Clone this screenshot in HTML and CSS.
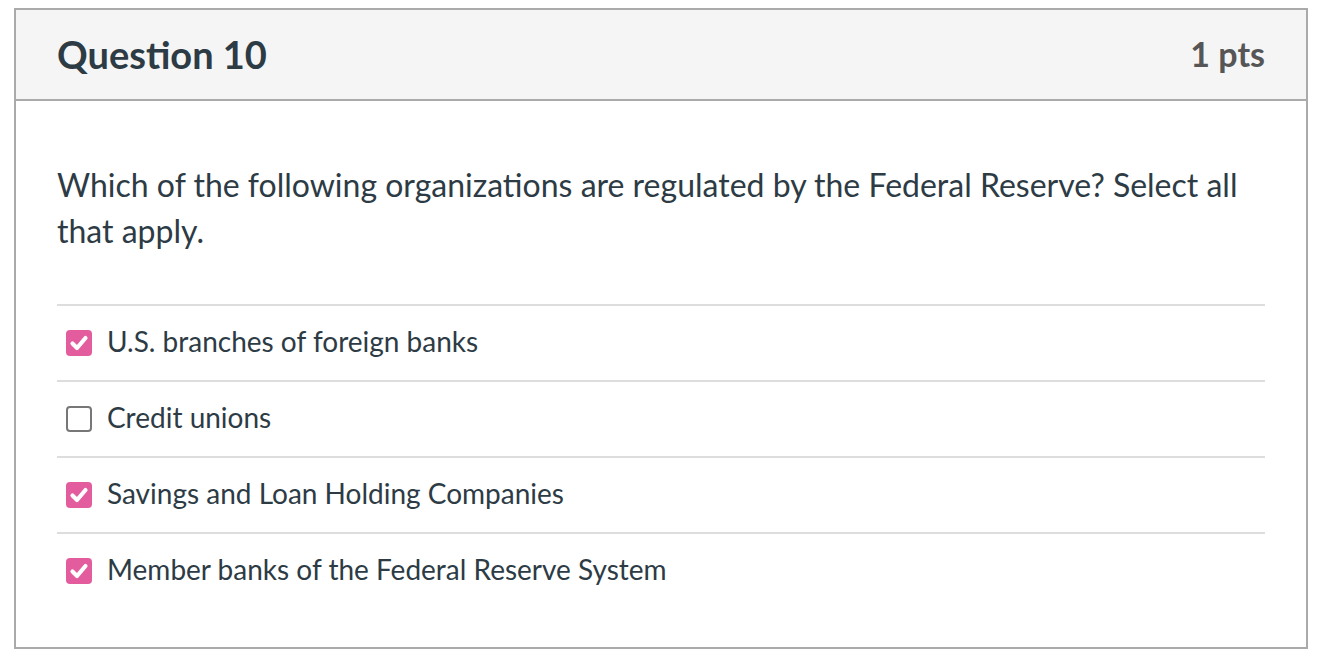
FILE: index.html
```html
<!DOCTYPE html>
<html>
<head>
<meta charset="utf-8">
<link rel="stylesheet" href="styles.css">
</head>
<body>
<div class="question">
  <div class="header">
    <h2 class="title">Question 10</h2>
    <div class="pts">1 pts</div>
  </div>
  <div class="content">
    <p class="text">Which of the following organizations are regulated by the Federal Reserve? Select all that apply.</p>
    <div class="answers">
      <div class="answer">
        <span class="box checked"><svg viewBox="0 0 26 26" width="26" height="26"><path d="M6.5 13.5 L11 18 L19.5 8" fill="none" stroke="#fff" stroke-width="4.2" stroke-linecap="round" stroke-linejoin="round"/></svg></span>
        <span class="label">U.S. branches of foreign banks</span>
      </div>
      <div class="answer">
        <span class="box"></span>
        <span class="label">Credit unions</span>
      </div>
      <div class="answer">
        <span class="box checked"><svg viewBox="0 0 26 26" width="26" height="26"><path d="M6.5 13.5 L11 18 L19.5 8" fill="none" stroke="#fff" stroke-width="4.2" stroke-linecap="round" stroke-linejoin="round"/></svg></span>
        <span class="label">Savings and Loan Holding Companies</span>
      </div>
      <div class="answer">
        <span class="box checked"><svg viewBox="0 0 26 26" width="26" height="26"><path d="M6.5 13.5 L11 18 L19.5 8" fill="none" stroke="#fff" stroke-width="4.2" stroke-linecap="round" stroke-linejoin="round"/></svg></span>
        <span class="label">Member banks of the Federal Reserve System</span>
      </div>
    </div>
  </div>
</div>
</body>
</html>
```

FILE: styles.css
```css
html, body {
  background: #fff;
}
body {
  margin: 8px 0 0 14px;
  font-family: Lato, "Open Sans", sans-serif;
  color: #2d3b45;
}
.question {
  width: 1290px;
  border: 2px solid #aaaaaa;
}
.header {
  height: 89px;
  background: #f5f5f5;
  border-bottom: 2px solid #aaaaaa;
  display: flex;
  align-items: center;
  justify-content: space-between;
  padding: 0 41px 2px;
  box-sizing: border-box;
  height: 91px;
}
.title {
  margin: 0;
  font-size: 38px;
  font-weight: 700;
  color: #2d3b45;
}
.pts {
  font-size: 34px;
  font-weight: 700;
  color: #565656;
}
.content {
  padding: 61px 41px 39px;
}
.text {
  margin: 0 0 50px;
  font-size: 32px;
  line-height: 46px;
}
.answer {
  height: 74px;
  border-top: 2px solid #dddddd;
  display: flex;
  align-items: center;
}
.box {
  width: 26px;
  height: 26px;
  box-sizing: border-box;
  border: 2px solid #777777;
  border-radius: 4px;
  margin-left: 9px;
  margin-right: 15px;
  display: flex;
  align-items: center;
  justify-content: center;
  flex: none;
}
.box.checked {
  background: #e35c9e;
  border: none;
}
.label {
  font-size: 28px;
  padding-bottom: 4px;
}
```
